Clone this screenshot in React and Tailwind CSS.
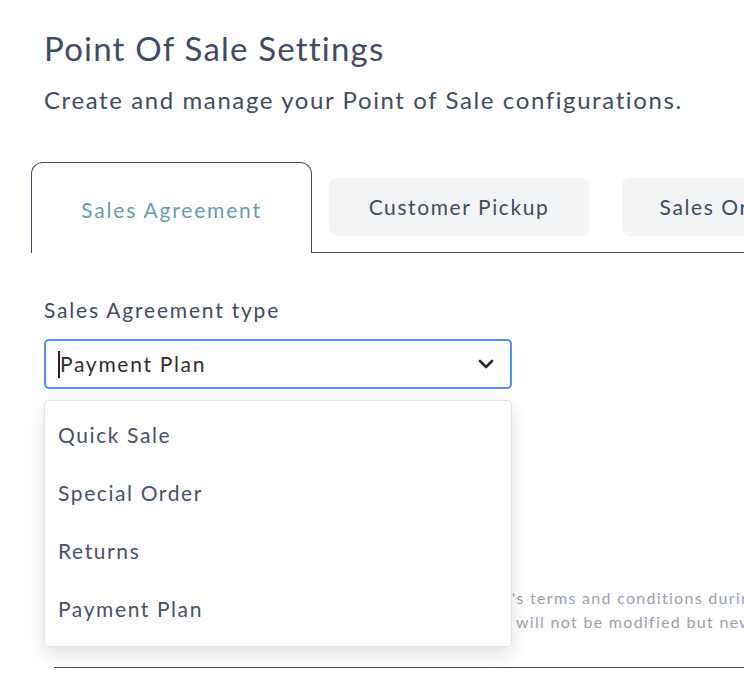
import { useState } from "react";

const options = ["Quick Sale", "Special Order", "Returns", "Payment Plan"];

export default function App() {
  const [value] = useState("Payment Plan");

  return (
    <div className="min-h-screen w-[744px] overflow-hidden bg-white font-['Lato',sans-serif] text-[#414b61]">
      {/* Header */}
      <div className="pl-[44px] pt-[28px]">
        <h1 className="text-[33px] leading-[40px] tracking-[1.2px] text-[#414b61]">Point Of Sale Settings</h1>
        <p className="mt-[17px] whitespace-nowrap text-[24px] leading-[30px] tracking-[1.6px] text-[#414b61]">
          Create and manage your Point of Sale configurations.
        </p>
      </div>

      {/* Tabs */}
      <div className="mt-[47px] flex pl-[31px]">
        <div className="flex h-[91px] w-[281px] shrink-0 items-center justify-center rounded-t-[12px] border border-b-0 border-[#414b61] pt-[4px] text-[21px] tracking-[1.8px] text-[#6a9bb0]">
          Sales Agreement
        </div>
        <div className="flex flex-1 items-center gap-[33px] border-b border-[#414b61] pl-[17px]">
          <div className="flex h-[58px] w-[260px] shrink-0 items-center justify-center rounded-[8px] bg-[#f3f4f6] text-[21px] tracking-[1.6px] text-[#414b61]">
            Customer Pickup
          </div>
          <div className="flex h-[58px] w-[260px] shrink-0 items-center justify-center whitespace-nowrap rounded-[8px] bg-[#f3f4f6] text-[21px] tracking-[1.6px] text-[#414b61]">
            Sales Order Form
          </div>
        </div>
      </div>

      {/* Form */}
      <div className="pl-[44px] pt-[44px]">
        <label className="block text-[21px] leading-[26px] tracking-[1.8px] text-[#414b61]">Sales Agreement type</label>
        <div className="relative mt-[16px] w-[468px]">
          <div className="flex h-[50px] items-center justify-between rounded-[5px] border-2 border-[#4f8ff7] pl-[12px] pr-[16px]">
            <div className="flex items-center">
              <span className="h-[27px] w-[2px] bg-[#222]" />
              <span className="text-[21px] tracking-[1.7px] text-[#2e2e2e]">{value}</span>
            </div>
            <svg width="16" height="10" viewBox="0 0 16 10" fill="none">
              <polyline points="2,2 8,8 14,2" stroke="#2b2b2b" strokeWidth="2.6" strokeLinecap="round" strokeLinejoin="round" />
            </svg>
          </div>

          {/* Open dropdown */}
          <div className="absolute left-0 top-[61px] z-10 w-[468px] rounded-[5px] border border-[#e2e4e8] bg-white pb-[8px] pt-[5px] shadow-[0_8px_18px_rgba(0,0,0,0.12)]">
            {options.map((o) => (
              <div key={o} className="flex h-[58px] items-center pl-[13px] text-[21px] tracking-[1.6px] text-[#47516a]">
                {o}
              </div>
            ))}
          </div>
        </div>

        {/* Content underneath the dropdown */}
        <div className="mt-[197px] whitespace-nowrap text-[16px] leading-[24px] tracking-[1.3px] text-[#9aa1ad]">
          <div className="flex">
            <div className="w-[468px] shrink-0 overflow-hidden">Use this section to edit the Payment Plan agreement</div>
            <div>'s terms and conditions during checkout.</div>
          </div>
          <div className="flex">
            <div className="w-[472px] shrink-0 overflow-hidden">Agreements that were already created</div>
            <div>will not be modified but new agreements will.</div>
          </div>
        </div>
        <div className="ml-[10px] mt-[33px] h-px bg-[#414b61]" />
      </div>
    </div>
  );
}
